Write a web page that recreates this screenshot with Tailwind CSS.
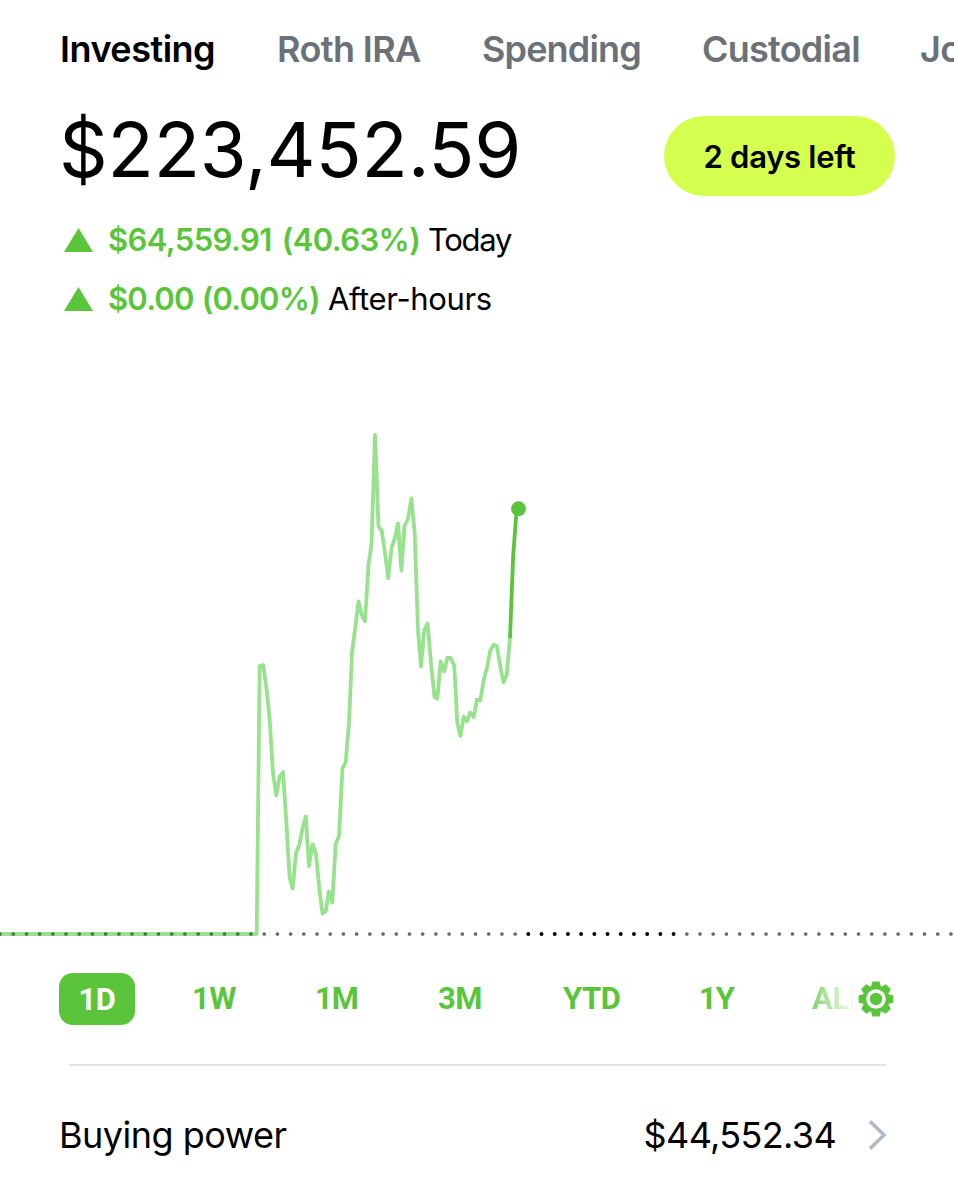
<!DOCTYPE html>
<html lang="en">
  <head>
    <meta charset="utf-8">
    <title>Investing</title>
    <script src="https://cdn.jsdelivr.net/npm/@tailwindcss/browser@4"></script>
  </head>
  <body class="w-[954px] h-[1199px] overflow-hidden bg-white text-black font-[Inter,sans-serif]">
    <!-- Account tabs -->
    <nav class="flex h-[99px] pl-[60px] overflow-hidden whitespace-nowrap text-4xl leading-[99px]! font-semibold text-[#6a7278]">
      <a class="shrink-0 w-[217px] tracking-[-0.5px] text-black">Investing</a>
      <a class="shrink-0 w-[205px] tracking-[-0.6px]">Roth IRA</a>
      <a class="shrink-0 w-[220px] tracking-[-0.85px]">Spending</a>
      <a class="shrink-0 w-[218px] tracking-[-0.75px]">Custodial</a>
      <a class="shrink-0 tracking-[-0.6px]">Joint</a>
    </nav>

    <!-- Balance -->
    <header class="flex items-start justify-between h-[111px] pl-[59px] pr-[59px]">
      <h1 class="text-[76px] leading-[101px] tracking-[-0.2px]">$223,452.59</h1>
      <button class="mt-[17px] w-[231px] h-20 pt-0.5 rounded-full bg-[#d4ff4e] text-[31px] font-semibold tracking-[-0.3px]">2 days left</button>
    </header>

    <!-- Changes -->
    <section class="text-[31px] leading-[59px] whitespace-nowrap">
      <div class="flex items-center h-[59px] pl-16">
        <svg class="w-[29px] h-6 mr-[15px]" viewBox="0 0 29 24"><path d="M14.5 0L29 24H0z" fill="#5ac53a"/></svg>
        <span class="w-[320px] font-semibold tracking-[-0.6px] [word-spacing:3px] text-[#5ac53a]">$64,559.91 (40.63%)</span>
        <span class="tracking-[-1.3px]">Today</span>
      </div>
      <div class="flex items-center h-[59px] pl-16">
        <svg class="w-[29px] h-6 mr-[15px]" viewBox="0 0 29 24"><path d="M14.5 0L29 24H0z" fill="#5ac53a"/></svg>
        <span class="w-[220px] font-semibold tracking-[-0.8px] [word-spacing:1px] text-[#5ac53a]">$0.00 (0.00%)</span>
        <span class="tracking-[-0.35px]">After-hours</span>
      </div>
    </section>

    <!-- Chart -->
    <svg class="block w-[954px] h-[645px]" viewBox="0 328 954 645" fill="none">
      <polyline stroke="#97e28c" stroke-width="3.8" stroke-linejoin="round" points="0,934 256.7,934 259.7,666 263.2,665 266.3,687 269.5,717 273,773 276.3,795.5 279.5,777 283,772 286,817 289.7,878.5 292.7,888.5 296,853 299.3,845 302.5,828 305.8,816.5 309,866 312.5,844.5 316,854 319.3,888.5 322.5,913.5 325.8,911 328.8,891.5 332.3,902.5 335.7,844 339,836 342.5,768 345.7,762.5 349,723 352,653 355.3,627 358.5,601.5 361.7,615 365,621.5 368.5,565 371.5,544 375,435 378.5,526.5 381.7,530.5 385,553 388.2,578 391.5,548 394.7,539 398,523.5 401.4,570.5 404.5,526 408,519 411.3,498.5 414.7,533 418,630 421,666.5 424.3,630 427.6,623.5 431,663 434.5,697 437.3,698.5 440.7,661.5 444.2,671.5 447.3,658 450.7,658 454.3,666 457.3,723 460.4,736 463.8,716.5 467,721.5 470.3,712.5 473.7,717 477,699.5 480.3,700.5 483.7,680 486.9,668 490.3,650.5 493.7,644.7 496.8,646 500.3,666.5 503.5,682.5 506.7,675 510,638"/>
      <polyline stroke="#5ac53a" stroke-width="3.8" stroke-linejoin="round" points="510,638 513.2,555 516.4,513 518.5,508.7"/>
      <circle cx="518.5" cy="508.7" r="7.4" fill="#5ac53a"/>
      <!-- previous close, regular hours are the solid black dots -->
      <g stroke="#000" stroke-linecap="round" stroke-dasharray="0 13.208">
        <path d="M0 934H256" stroke-width="3.7" stroke-opacity=".5"/>
        <path d="M264.2 934H520" stroke-width="3.7" stroke-opacity=".6"/>
        <path d="M528.3 934H676" stroke-width="3.9"/>
        <path d="M686.8 934H954" stroke-width="3.7" stroke-opacity=".6"/>
      </g>
    </svg>

    <!-- Ranges -->
    <div class="flex items-center h-[52px] pl-[59px] text-[31px] font-bold leading-[54px] whitespace-nowrap text-[#5ac53a] font-[Roboto,sans-serif]">
      <span class="w-[76px] h-[52px] mr-[57px] rounded-[14px] bg-[#5ac53a] text-center text-white tracking-[-0.5px]">1D</span>
      <span class="w-[123px] tracking-[-0.5px]">1W</span>
      <span class="w-[123px] tracking-[-1px]">1M</span>
      <span class="w-[125px] tracking-[-0.5px]">3M</span>
      <span class="w-[136px] tracking-[-0.4px]">YTD</span>
      <span class="w-[113px] tracking-[-1px]">1Y</span>
      <span class="w-[41px] mr-[4.5px] overflow-hidden bg-linear-to-r from-[#5ac53a]/75 to-[#5ac53a]/5 bg-clip-text text-transparent tracking-[-0.3px]">ALL</span>
      <svg class="w-9 h-9" viewBox="-18 -18 36 36" fill="#5ac53a">
        <path id="tooth" d="M-5 -12L-3.6 -17.4H3.6L5 -12V12L3.6 17.4H-3.6L-5 12z"/>
        <use href="#tooth" transform="rotate(45)"/>
        <use href="#tooth" transform="rotate(90)"/>
        <use href="#tooth" transform="rotate(135)"/>
        <circle r="13.4"/>
        <circle r="8" stroke="#fff" stroke-width="3.6"/>
      </svg>
    </div>

    <hr class="mt-[39px] ml-[69px] w-[817px] border-t-2 border-[#e3e4e8]">

    <!-- Buying power -->
    <div class="flex items-center h-[137px] pl-[59px] pr-[67px] text-4xl">
      <span class="tracking-[-0.5px]">Buying power</span>
      <span class="ml-auto mr-8 tracking-[-0.65px]">$44,552.34</span>
      <svg class="w-[19px] h-8" viewBox="0 0 19 32" fill="none" stroke="#b2bac4" stroke-width="3.6"><path d="M2 2.4L16 16L2 29.6"/></svg>
    </div>
  </body>
</html>
